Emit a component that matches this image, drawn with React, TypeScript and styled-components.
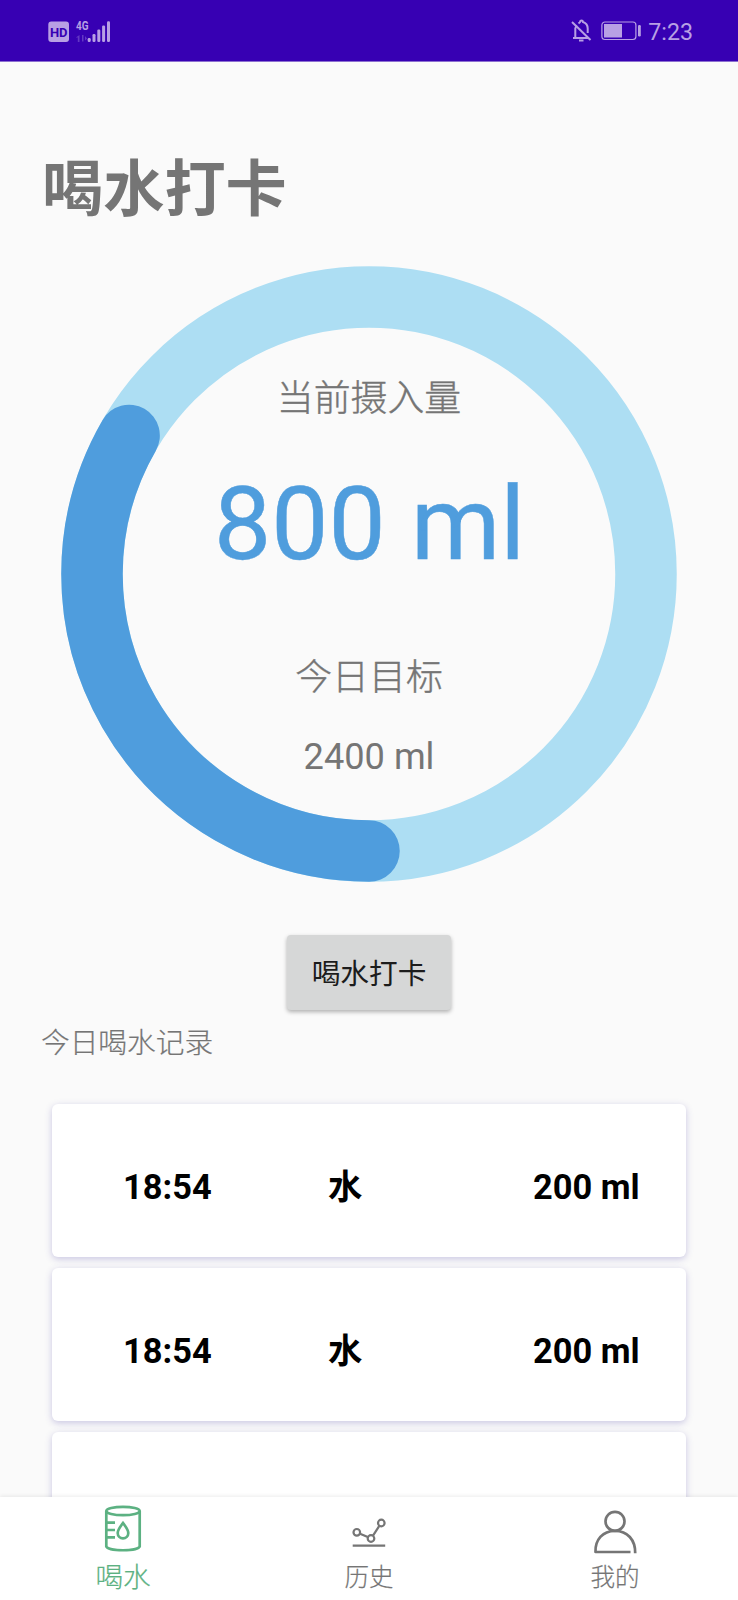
import React from "react";
import styled, { createGlobalStyle } from "styled-components";

const GlobalStyle = createGlobalStyle`
  * { box-sizing: border-box; }
  body { margin: 0; background: #fafafa; }
`;

const Screen = styled.div`
  display: flex;
  flex-direction: column;
  width: 738px;
  height: 1600px;
  overflow: hidden;
  background: #fafafa;
  color: #757575;
  font-family: Roboto, "Noto Sans CJK SC", sans-serif;
`;

const StatusBar = styled.header`
  flex: none;
  display: flex;
  align-items: center;
  justify-content: space-between;
  height: 61px;
  padding: 0 45px 0 48px;
  background: #3700b3;
  border-bottom: 0;
  box-shadow: 0 1px 0 #8c70d0;
`;

const StatusGroup = styled.div`
  display: flex;
  align-items: center;
`;

const Clock = styled.span`
  margin-left: 7px;
  font-size: 23.2px;
  line-height: 28px;
  color: #b8a0e4;
  padding-top: 2px;
`;

const Content = styled.main`
  flex: 1;
  min-height: 0;
  margin-top: 1px;
  overflow: hidden;
  display: flex;
  flex-direction: column;
  align-items: center;
`;

const Title = styled.h1`
  align-self: flex-start;
  margin: 83px 0 0 42px;
  font-size: 61.2px;
  line-height: 90px;
  font-weight: 700;
  height: 90px;
`;

const Gauge = styled.section`
  display: grid;
  flex: none;
  width: 616px;
  height: 616px;
  margin-top: 31px;
  > * { grid-area: 1 / 1; }
`;

const GaugeText = styled.div`
  display: flex;
  flex-direction: column;
  align-items: center;
`;

const Caption = styled.span<{ $top: number }>`
  margin-top: ${(p) => p.$top}px;
  font-size: 36.9px;
  line-height: 54px;
  height: 54px;
  white-space: nowrap;
`;

const ChineseCaption = styled(Caption)`
  font-weight: 300;
  -webkit-text-stroke: 0.4px currentColor;
`;

const GoalAmount = styled(Caption)`
  font-size: 36.2px;
`;

const Amount = styled.span`
  margin-top: 39.5px;
  padding-left: 1px;
  font-size: 101.8px;
  line-height: 120px;
  height: 120px;
  color: #4f9ddd;
  white-space: pre;
  -webkit-text-stroke: 0.5px currentColor;
`;

const CheckInButton = styled.button`
  flex: none;
  width: 164.5px;
  height: 75px;
  margin-top: 52.5px;
  padding: 3px 0 0;
  border: 0;
  border-radius: 4px;
  background: #d6d7d7;
  color: #1c1c1c;
  font: 400 28.7px/42px Roboto, "Noto Sans CJK SC", sans-serif;
  box-shadow: 0 2px 4px rgba(0, 0, 0, 0.3);
`;

const ListHeading = styled.h2`
  align-self: flex-start;
  margin: 12px 0 0 41px;
  font-size: 28.7px;
  line-height: 42px;
  height: 42px;
  font-weight: 300;
  -webkit-text-stroke: 0.2px currentColor;
`;

const RecordList = styled.div`
  flex: none;
  display: flex;
  flex-direction: column;
  gap: 10.5px;
  margin-top: 40px;
`;

const Record = styled.article`
  display: grid;
  grid-template-columns: 205px 205px auto;
  align-items: center;
  width: 634px;
  height: 153.5px;
  padding: 14px 0 0 71px;
  border-radius: 6px;
  background: #fff;
  color: #000;
  font-size: 34.4px;
  line-height: 50px;
  font-weight: 700;
  box-shadow: 0 2px 7px rgba(60, 50, 160, 0.26);
`;

const NavBar = styled.nav`
  flex: none;
  position: relative;
  display: grid;
  grid-template-columns: repeat(3, 1fr);
  height: 103px;
  background: #fff;
  box-shadow: 0 -1px 4px rgba(0, 0, 0, 0.08);
`;

const NavItem = styled.a<{ $active?: boolean }>`
  display: flex;
  flex-direction: column;
  align-items: center;
  color: ${(p) => (p.$active ? "#5cb182" : "#757575")};
  font-size: ${(p) => (p.$active ? 27.6 : 24.6)}px;
  font-weight: 300;
`;

const NavIcon = styled.svg`
  flex: none;
  width: 54px;
  height: 50px;
  margin-top: 8px;
  fill: none;
  stroke: currentColor;
`;

const NavLabel = styled.span`
  line-height: 40px;
  margin-top: 2.5px;
  -webkit-text-stroke: 0.2px currentColor;
`;

const records = [
  { time: "18:54", drink: "水", amount: "200 ml" },
  { time: "18:54", drink: "水", amount: "200 ml" },
  { time: "", drink: "", amount: "" },
];

function SignalIcons() {
  return (
    <svg width="64" height="28" viewBox="0 0 64 28" fill="#b8a0e4">
      <rect x="0.3" y="4.5" width="20.7" height="20.5" rx="3" />
      <text x="10.7" y="19.500" textAnchor="middle" fontFamily="Roboto" fontWeight="700" fontSize="13" fill="#3700b3">HD</text>
      <text x="28" y="13.200" fontFamily="Roboto" fontWeight="700" fontSize="13" textLength="12.5" lengthAdjust="spacingAndGlyphs">4G</text>
      <path d="M31.5 18v7h-1.700v-4.500h-2zM35.500 18v6.500h-1.500v-6.500zM37 19l2 2.500-2 2z" opacity="0.35" />
      <rect x="39.700" y="21" width="3" height="4" rx="1.200" />
      <rect x="44.500" y="17" width="3" height="8" rx="1.200" />
      <rect x="49.300" y="12.500" width="3" height="12.500" rx="1.200" />
      <rect x="54.100" y="8.500" width="3" height="16.500" rx="1.200" />
      <rect x="59" y="4.300" width="3" height="20.700" rx="1.200" />
    </svg>
  );
}

function MutedBell() {
  return (
    <svg width="21" height="24" viewBox="0 0 21 24" fill="none" stroke="#b8a0e4" strokeWidth="2">
      <path d="M2 19h16M4.300 18V9.500l1.200-3M7.500 4.500C8.300 3.700 9 3.400 9 3c.3-2 2.800-2 3 0 3 1 4.700 3.500 4.700 6.500V14" />
      <path d="M1 3l18.500 18" />
      <path d="M8 21.500h4.500" strokeWidth="2" />
    </svg>
  );
}

const BatteryIcon = styled.svg`
  margin: 1px -1px 0 9px;
`;

function Battery() {
  return (
    <BatteryIcon width="41" height="20" viewBox="0 0 41 20" fill="none">
      <rect x="0.900" y="1" width="34" height="17.500" rx="3" stroke="#b8a0e4" strokeWidth="1.200" />
      <rect x="3" y="3" width="18" height="13.500" fill="#b8a0e4" />
      <rect x="37" y="4" width="2.800" height="11.500" rx="1.200" fill="#b8a0e4" />
    </BatteryIcon>
  );
}

export default function App() {
  return (
    <>
      <GlobalStyle />
      <Screen>
        <StatusBar>
          <StatusGroup><SignalIcons /></StatusGroup>
          <StatusGroup>
            <MutedBell />
            <Battery />
            <Clock>7:23</Clock>
          </StatusGroup>
        </StatusBar>
        <Content>
          <Title>喝水打卡</Title>
          <Gauge>
            <svg width="616" height="616" viewBox="0 0 616 616" fill="none" strokeWidth="61.500">
              <circle cx="308" cy="308" r="277" stroke="#addef3" />
              <path d="M308 585A277 277 0 0 1 68.100 169.500" stroke="#4f9ddd" strokeLinecap="round" />
            </svg>
            <GaugeText>
              <ChineseCaption $top={105.5}>当前摄入量</ChineseCaption>
              <Amount>800 ml</Amount>
              <ChineseCaption $top={66}>今日目标</ChineseCaption>
              <GoalAmount $top={24.5}>2400 ml</GoalAmount>
            </GaugeText>
          </Gauge>
          <CheckInButton>喝水打卡</CheckInButton>
          <ListHeading>今日喝水记录</ListHeading>
          <RecordList>
            {records.map((r, i) => (
              <Record key={i}>
                <span>{r.time}</span>
                <span>{r.drink}</span>
                <span>{r.amount}</span>
              </Record>
            ))}
          </RecordList>
        </Content>
        <NavBar>
          <NavItem $active>
            <NavIcon viewBox="0 0 54 50" strokeWidth="2.700">
              <ellipse cx="27" cy="6" rx="16.700" ry="4.200" />
              <path d="M10.300 6v35.500c2 5 31.400 5 33.400 0V6M11 17.700h8M11 25h8M11 32.300h8" />
              <path d="M27 18c2.800 4 5.300 6.700 5.300 10a5.300 5.300 0 0 1-10.600 0c0-3.300 2.500-6 5.300-10z" />
            </NavIcon>
            <NavLabel>喝水</NavLabel>
          </NavItem>
          <NavItem>
            <NavIcon viewBox="0 0 54 50" strokeWidth="2.200">
              <circle cx="14.800" cy="27.300" r="3.300" />
              <circle cx="29" cy="33.500" r="3.300" />
              <circle cx="39.300" cy="18" r="3.300" />
              <path d="M18 28.700l7.800 3.400M31 30.600l6.300-9.700M10.700 40.700h32.500" />
            </NavIcon>
            <NavLabel>历史</NavLabel>
          </NavItem>
          <NavItem>
            <NavIcon viewBox="0 0 54 50" strokeWidth="2.700">
              <circle cx="27" cy="16.300" r="9.500" />
              <path d="M42.500 47H7.500c-.5-12 7-21.200 19.500-21.200 12.300 0 20.500 9 20.200 22.500" strokeLinejoin="round" />
            </NavIcon>
            <NavLabel>我的</NavLabel>
          </NavItem>
        </NavBar>
      </Screen>
    </>
  );
}
